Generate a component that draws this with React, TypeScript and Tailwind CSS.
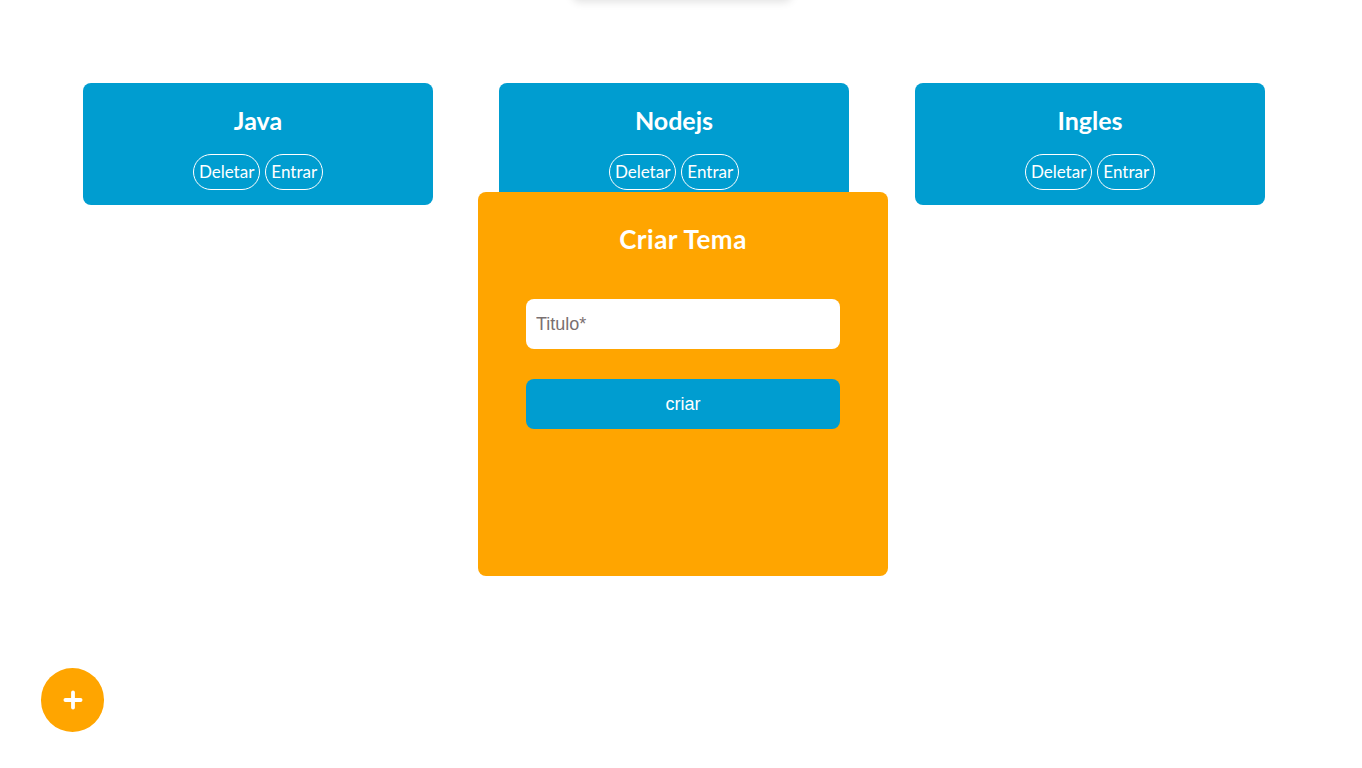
import { Plus } from 'lucide-react';

const temas = ['Java', 'Nodejs', 'Ingles'];

function TemaCard({ nome }: { nome: string }) {
  return (
    <div className="w-[350px] h-[122px] rounded-lg bg-[#009dd0] flex flex-col items-center pt-[23px]">
      <h2 className="text-[25px] leading-[28px] font-bold text-white">{nome}</h2>
      <div className="mt-[20px] flex gap-[5px]">
        <button className="h-[36px] px-[5px] rounded-full border border-white text-white text-[17px]">Deletar</button>
        <button className="h-[36px] px-[5px] rounded-full border border-white text-white text-[17px]">Entrar</button>
      </div>
    </div>
  );
}

export default function App() {
  return (
    <div className="relative min-h-screen bg-white overflow-hidden font-['Lato',sans-serif]">
      {/* Top bar shadow */}
      <div className="absolute left-[572px] top-[-40px] w-[220px] h-[40px] bg-white shadow-[0_2px_8px_rgba(0,0,0,0.12)] rounded-b-lg" />

      <div className="pt-[83px] pl-[83px] flex gap-[66px]">
        {temas.map((t) => (
          <TemaCard key={t} nome={t} />
        ))}
      </div>

      {/* Modal */}
      <div className="absolute left-[478px] top-[192px] w-[410px] h-[384px] rounded-lg bg-[#ffa500] flex flex-col items-center pt-[32px]">
        <h2 className="text-[26px] leading-[30px] tracking-[0.5px] font-bold text-white">Criar Tema</h2>
        <input
          placeholder="Titulo*"
          className="mt-[45px] w-[314px] h-[50px] rounded-lg bg-white px-[10px] text-[18px] font-['Liberation_Sans',sans-serif] text-gray-800 placeholder:text-[#7a7070] outline-none"
        />
        <button className="mt-[30px] w-[314px] h-[50px] rounded-lg bg-[#009dd0] text-white text-[18px] font-['Liberation_Sans',sans-serif]">
          criar
        </button>
      </div>

      {/* Floating button */}
      <button className="absolute left-[41px] top-[668px] w-[63px] h-[64px] rounded-full bg-[#ffa500] flex items-center justify-center text-white">
        <Plus className="w-[26px] h-[26px]" strokeWidth={3.5} />
      </button>
    </div>
  );
}
